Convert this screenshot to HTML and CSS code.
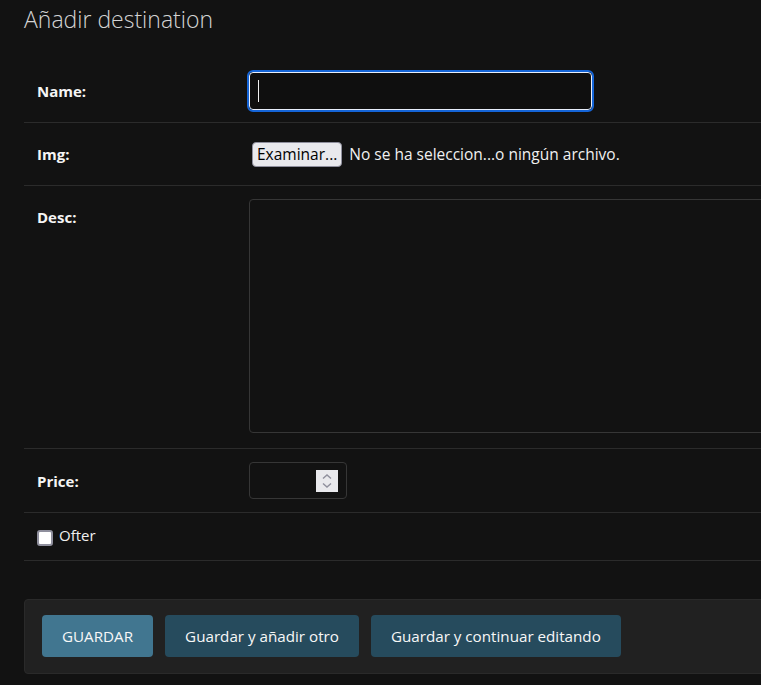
FILE: index.html
```html
<!DOCTYPE html>
<html lang="es">
<head>
<meta charset="utf-8">
<title>Añadir destination</title>
<link rel="stylesheet" href="styles.css">
</head>
<body>
<div class="content">
  <h1 class="title">Añadir destination</h1>
  <form class="form">
    <fieldset class="module">
      <div class="form-row">
        <label class="label" for="id_name">Name:</label>
        <div class="field">
          <span class="name-wrap">
            <input class="text-input focused" type="text" id="id_name">
            <span class="caret"></span>
          </span>
        </div>
      </div>
      <div class="form-row">
        <label class="label">Img:</label>
        <div class="field file-field">
          <span class="file-btn">Examinar...</span>
          <span class="file-text">No se ha seleccion...o ningún archivo.</span>
        </div>
      </div>
      <div class="form-row top">
        <label class="label">Desc:</label>
        <div class="field">
          <textarea class="textarea"></textarea>
        </div>
      </div>
      <div class="form-row price-row">
        <label class="label">Price:</label>
        <div class="field">
          <div class="number-input">
            <div class="spinner">
              <svg width="22" height="22" viewBox="0 0 22 22">
                <path d="M7 8.5 L11 5 L15 8.5" fill="none" stroke="#8f8f9d" stroke-width="1.4"/>
                <path d="M7 13.5 L11 17 L15 13.5" fill="none" stroke="#8f8f9d" stroke-width="1.4"/>
              </svg>
            </div>
          </div>
        </div>
      </div>
      <div class="form-row check-row">
        <span class="checkbox"></span>
        <label class="check-label">Ofter</label>
      </div>
    </fieldset>
    <div class="submit-row">
      <button type="button" class="btn btn-default">GUARDAR</button>
      <button type="button" class="btn">Guardar y añadir otro</button>
      <button type="button" class="btn">Guardar y continuar editando</button>
    </div>
  </form>
</div>
</body>
</html>
```

FILE: styles.css
```css
html, body {
  margin: 0;
  padding: 0;
  overflow: hidden;
  background: #121212;
}
body {
  font-family: "Open Sans", "Noto Sans", sans-serif;
  color: #eeeeee;
  height: 685px;
}
.content {
  padding-left: 24px;
  width: 1000px;
}
.title {
  margin: 0;
  padding-top: 4px;
  height: 56px;
  font-size: 23px;
  line-height: 30px;
  font-weight: 300;
  color: #d4d4d4;
}
.form {
  margin: 0;
}
.module {
  margin: 0;
  padding: 0;
  border: 0;
}
.form-row {
  display: flex;
  align-items: center;
  padding: 12px 13px;
  border-bottom: 1px solid #2b2b2b;
}
.form-row.top {
  align-items: flex-start;
}
.label {
  width: 212px;
  flex: none;
  height: 38px;
  line-height: 38px;
  font-size: 15px;
  font-weight: 700;
  color: #f5f5f5;
}
.field {
  min-height: 38px;
  display: flex;
  align-items: center;
}
.price-row .field {
  min-height: 39px;
}
.name-wrap {
  position: relative;
  display: block;
}
.text-input {
  display: block;
  box-sizing: border-box;
  width: 343px;
  height: 38px;
  margin: 0;
  background: #0f0f0f;
  border: 1px solid #e8eefa;
  border-radius: 4px;
  outline: 2px solid #1565d8;
  color: #eee;
}
.caret {
  position: absolute;
  left: 9px;
  top: 8px;
  width: 1px;
  height: 22px;
  background: #f0f0f0;
}
.file-field {
  gap: 7px;
  font-size: 15.5px;
}
.file-btn {
  margin-left: 3px;
  display: inline-block;
  box-sizing: border-box;
  height: 25px;
  line-height: 22px;
  padding: 0 4px;
  background: #e9e9ed;
  color: #000;
  border: 1px solid #8f8f9d;
  border-radius: 4px;
  font-size: 15.5px;
}
.file-text {
  color: #f0f0f0;
}
.textarea {
  display: block;
  box-sizing: border-box;
  width: 620px;
  height: 234px;
  margin: 1px 0 3px;
  background: #121212;
  border: 1px solid #363636;
  border-radius: 4px;
  resize: none;
}
.number-input {
  box-sizing: border-box;
  width: 98px;
  height: 37px;
  border: 1px solid #363636;
  border-radius: 4px;
  display: flex;
  align-items: center;
  justify-content: flex-end;
  padding-right: 8px;
}
.spinner {
  width: 22px;
  height: 22px;
  background: #e9e9ed;
}
.spinner svg {
  display: block;
}
.check-row {
  padding-top: 12px;
  padding-bottom: 12px;
  height: 23px;
  align-items: flex-start;
}
.checkbox {
  box-sizing: border-box;
  width: 16px;
  height: 16px;
  margin-top: 5px;
  background: #fff;
  border: 2px solid #8f8f9d;
  border-radius: 3px;
}
.check-label {
  margin-left: 6px;
  font-size: 15px;
  line-height: 20px;
  color: #f0f0f0;
}
.submit-row {
  margin-top: 38px;
  display: flex;
  gap: 12px;
  padding: 15px 17px 16px;
  background: #212121;
  border: 1px solid #2a2a2a;
  border-radius: 4px;
}
.btn {
  height: 42px;
  padding: 0 20px;
  border: 0;
  border-radius: 4px;
  background: #264b5d;
  color: #f7f7f7;
  font-family: "Open Sans", "Noto Sans", sans-serif;
  font-size: 15.2px;
}
.btn-default {
  background: #417690;
}
```
